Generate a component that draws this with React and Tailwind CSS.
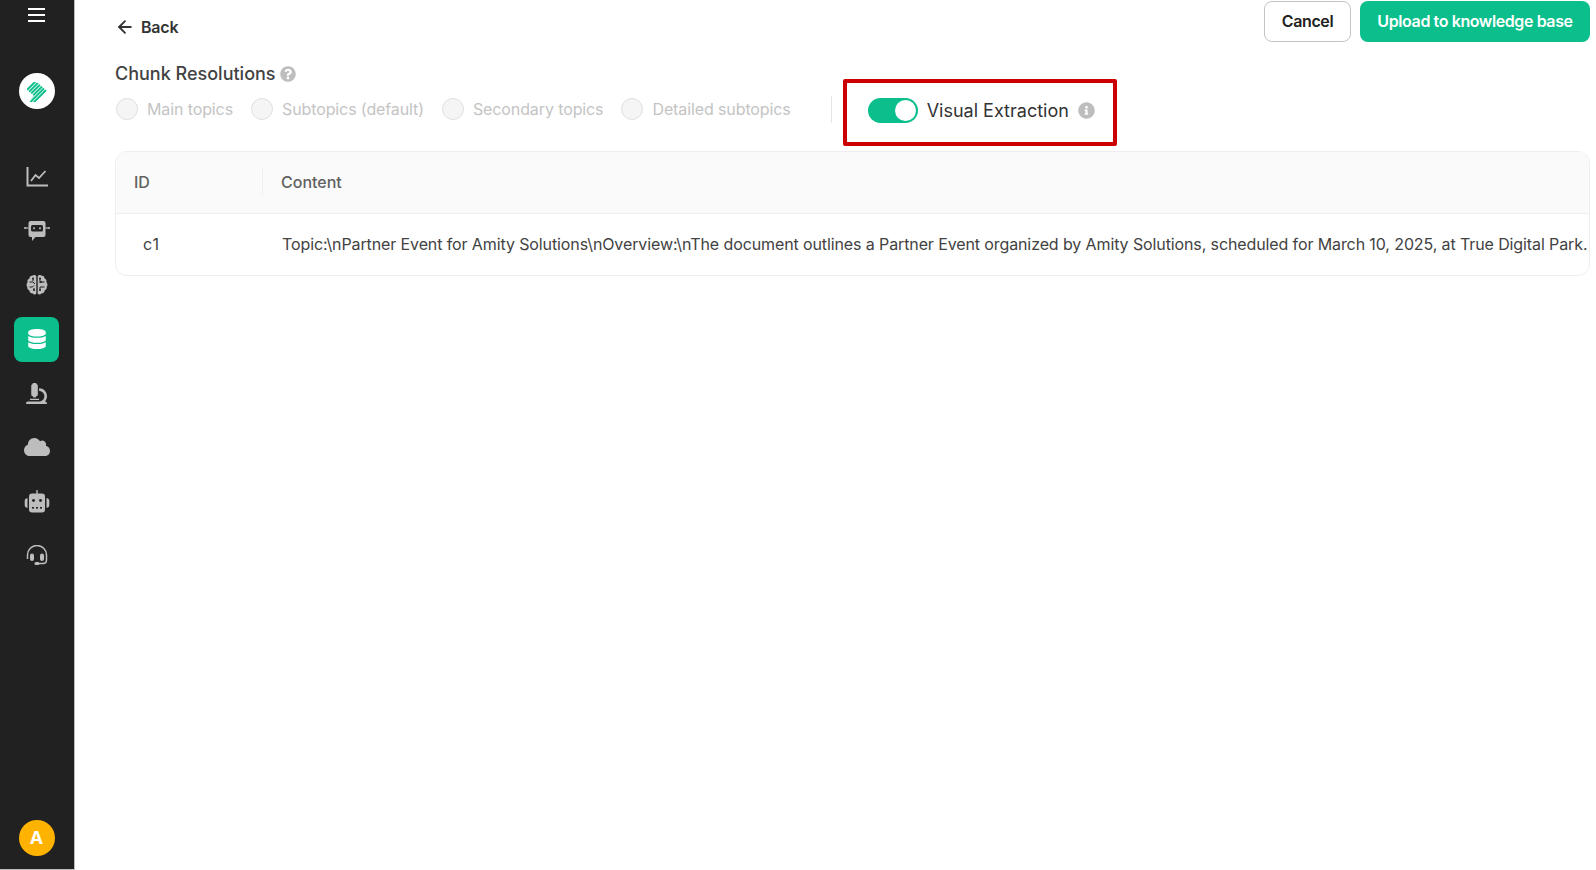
import { ArrowLeft } from 'lucide-react'
import { FaDatabase, FaMicroscope, FaCloud, FaInfoCircle, FaQuestionCircle } from 'react-icons/fa'

const font = { fontFamily: 'Inter, "Liberation Sans", sans-serif' }

function ChartIcon() {
  return (
    <svg width="22" height="20" viewBox="0 0 22 20" fill="none" stroke="#bdbdbd" strokeWidth="2">
      <path d="M1.500 0v18.500H22" />
      <path d="M5 14l4.500-6 3.500 3 6.500-7" strokeWidth="1.800" />
    </svg>
  )
}

function BotChat() {
  return (
    <svg width="26" height="22" viewBox="0 0 26 22" fill="#bdbdbd">
      <path d="M4.500 3a2 2 0 0 1 2-2h13a2 2 0 0 1 2 2v12a2 2 0 0 1-2 2h-8l-3.500 4v-4H6.500a2 2 0 0 1-2-2z" />
      <rect x="1" y="7.400" width="3.500" height="1.200" />
      <rect x="21.500" y="7.400" width="3.500" height="1.200" />
      <circle cx="1" cy="8" r="1" />
      <circle cx="25" cy="8" r="1" />
      <rect x="7" y="5" width="12" height="6.500" rx="1.500" fill="#212121" />
      <circle cx="10" cy="8.200" r="1" fill="#bdbdbd" />
      <circle cx="16" cy="8.200" r="1" fill="#bdbdbd" />
    </svg>
  )
}

function BrainIcon() {
  return (
    <svg width="22" height="22" viewBox="0 0 22 22" fill="#bdbdbd">
      <path d="M10.300 2.200C9.500.8 7.300.6 6.200 1.800 4.600 1.600 3.300 2.900 3.500 4.500 1.900 5 1 6.600 1.600 8.200.4 9.300.1 11.500 1.300 12.800.9 14.500 1.900 16 3.400 16.400c0 1.700 1.300 3 3 2.900 1 1.500 3 1.600 3.900.4z" />
      <path d="M11.700 2.200c.8-1.400 3-1.600 4.100-.4 1.600-.2 2.900 1.100 2.700 2.700 1.600.5 2.500 2.100 1.900 3.700 1.200 1.100 1.500 3.300.3 4.600.4 1.700-.6 3.200-2.100 3.600 0 1.700-1.300 3-3 2.900-1 1.500-3 1.600-3.900.4z" />
      <g stroke="#212121" strokeWidth="1" fill="none">
        <path d="M3.500 8h3.500l2 2M3.500 13h3l1.500-1.500M7 4.500v2.500M8 16v-2" />
        <path d="M18.500 8H15M14 4.500V9M18.500 13H14M14 13v3" />
      </g>
      <g fill="#212121">
        <circle cx="7" cy="4.500" r="1" />
        <circle cx="14" cy="4.500" r="1" />
        <circle cx="15" cy="8" r="1" />
        <circle cx="8" cy="16" r="1" />
        <circle cx="14" cy="16" r="1" />
      </g>
    </svg>
  )
}

function RobotIcon() {
  return (
    <svg width="26" height="24" viewBox="0 0 26 24" fill="#bdbdbd">
      <rect x="12.300" y="0" width="1.400" height="4" />
      <rect x="5" y="3.500" width="16" height="19" rx="3" />
      <path d="M3.500 8v10c-2-.4-2.800-1.500-2.800-3v-4c0-1.500.8-2.600 2.800-3zM22.500 8v10c2-.4 2.800-1.500 2.800-3v-4c0-1.500-.8-2.600-2.800-3z" />
      <circle cx="9.500" cy="10.500" r="1.400" fill="#212121" />
      <circle cx="16.500" cy="10.500" r="1.400" fill="#212121" />
      <rect x="8" y="17" width="2" height="1.600" fill="#212121" />
      <rect x="12" y="17" width="2" height="1.600" fill="#212121" />
      <rect x="16" y="17" width="2" height="1.600" fill="#212121" />
    </svg>
  )
}

function HeadsetIcon() {
  return (
    <svg width="22" height="22" viewBox="0 0 22 22" fill="none">
      <path d="M1.500 14V10a9.500 9.500 0 0 1 19 0v5c0 2-1.500 3.500-3.500 3.500h-4" stroke="#bdbdbd" strokeWidth="1.500" />
      <rect x="4" y="8.500" width="4" height="7.500" rx="2" fill="#bdbdbd" />
      <rect x="14" y="8.500" width="4" height="7.500" rx="2" fill="#bdbdbd" />
      <rect x="8.500" y="17" width="5" height="3" rx="1.500" fill="#bdbdbd" />
    </svg>
  )
}

function Logo() {
  return (
    <div className="w-9 h-9 rounded-full bg-white flex items-center justify-center">
      <svg width="22" height="22" viewBox="0 0 20 20">
        <defs>
          <clipPath id="logoShape">
            <path d="M1 5 L5 1 L8 2 L10 2 L19 10 L9 20 L3 20 L7 14 L1 9 Z" />
          </clipPath>
        </defs>
        <g clipPath="url(#logoShape)" stroke="#0cbf8c" strokeWidth="1.800">
          {[-8, -4.500, -1, 2.500, 6, 9.500, 13, 16.500, 20, 23.500].map(o => (
            <line key={o} x1={o - 4} y1="22" x2={o + 20} y2="-2" />
          ))}
        </g>
      </svg>
    </div>
  )
}

function NavItem({ active, children }) {
  return (
    <div className={'w-[45px] h-[45px] rounded-lg flex items-center justify-center ' + (active ? 'bg-[#0abf8c]' : '')}>
      {children}
    </div>
  )
}

function Sidebar() {
  return (
    <aside className="w-[75px] h-[870px] shrink-0 bg-[#212121] border-r border-b border-[#bdbdbd] flex flex-col items-center pr-px">
      <div className="mt-[8px] w-[17px] flex flex-col gap-[4px]">
        <div className="h-[2px] bg-white" />
        <div className="h-[2px] bg-white" />
        <div className="h-[2px] bg-white" />
      </div>
      <div className="mt-[51px]">
        <Logo />
      </div>
      <nav className="mt-[45px] flex flex-col gap-[9.2px]">
        <NavItem><ChartIcon /></NavItem>
        <NavItem><BotChat /></NavItem>
        <NavItem><BrainIcon /></NavItem>
        <NavItem active><FaDatabase size={20} color="#fff" /></NavItem>
        <NavItem><FaMicroscope size={21} color="#bdbdbd" /></NavItem>
        <NavItem><FaCloud size={26} color="#bdbdbd" /></NavItem>
        <NavItem><RobotIcon /></NavItem>
        <NavItem><HeadsetIcon /></NavItem>
      </nav>
      <div className="mt-auto mb-[13px] w-9 h-9 rounded-full bg-[#ffb300] text-white font-bold text-lg flex items-center justify-center">
        A
      </div>
    </aside>
  )
}

function Radio({ label }) {
  return (
    <label className="flex items-center gap-[9px]">
      <span className="w-[22px] h-[22px] rounded-full bg-[#f5f5f5] border border-[#e0e0e0]" />
      <span className="text-base tracking-[-0.11px] text-[#c4c4c4]">{label}</span>
    </label>
  )
}

export default function App() {
  return (
    <div className="flex h-[870px] w-[1596px] overflow-hidden bg-white text-[#212121]" style={font}>
      <Sidebar />

      <main className="flex-1 min-w-0 pl-[40px] pr-[6px]">
        {/* Top bar */}
        <div className="flex justify-between items-start pt-px h-[43px]">
          <button className="mt-[14px] flex items-center gap-[6px] text-base font-semibold tracking-[-0.2px] text-[#333]">
            <ArrowLeft size={20} strokeWidth={2.2} />
            Back
          </button>
          <div className="flex gap-[9px]">
            <button className="w-[87px] h-[41px] pb-px rounded-lg border border-[#c4c4c4] bg-white text-base font-semibold tracking-[-0.4px]">
              Cancel
            </button>
            <button className="w-[230px] h-[41px] pb-px rounded-lg bg-[#0abf8c] text-white text-base font-semibold tracking-[-0.4px]">
              Upload to knowledge base
            </button>
          </div>
        </div>

        {/* Chunk options */}
        <div className="mt-[20px] flex items-center gap-[4px] text-lg font-medium text-[#424242] leading-[22px]">
          Chunk Resolutions
          <FaQuestionCircle size={16} color="#bdbdbd" />
        </div>
        <div className="flex items-center -mt-[6px] h-[67px]">
          <div className="flex items-center gap-[18px] mb-[8px] ml-px">
            <Radio label="Main topics" />
            <Radio label="Subtopics (default)" />
            <Radio label="Secondary topics" />
            <Radio label="Detailed subtopics" />
          </div>
          <div className="w-px h-[27px] bg-[#e5e5e5] ml-[40px] mb-[6px]" />
          <div className="ml-[11px] w-[274px] h-[67px] border-4 border-[#cc0000] rounded-[2px] flex items-center pl-[21px] pb-[4px]">
            <span className="w-[50px] h-[25px] rounded-full bg-[#0abf8c] flex items-center justify-end pr-[2px]">
              <span className="w-[21px] h-[21px] rounded-full bg-white" />
            </span>
            <span className="ml-[9px] text-lg text-[#333]">Visual Extraction</span>
            <FaInfoCircle className="ml-[9px]" size={17} color="#bdbdbd" />
          </div>
        </div>

        {/* Table */}
        <div className="mt-[5px] border border-[#eeeeee] rounded-xl overflow-hidden">
          <div className="flex items-center h-[62px] pb-[2px] bg-[#fafafa] border-b border-[#eeeeee] text-base font-medium text-[#616161]">
            <div className="w-[147px] pl-[18px] h-[26px] flex items-center border-r border-[#eeeeee]">ID</div>
            <div className="pl-[18px]">Content</div>
          </div>
          <div className="flex items-center h-[61px] pb-[2px] text-base text-[#424242]">
            <div className="w-[147px] pl-[27px] shrink-0 tracking-[1px]">c1</div>
            <div className="pl-[19px] whitespace-nowrap tracking-[-0.11px]">
              {'Topic:\\nPartner Event for Amity Solutions\\nOverview:\\nThe document outlines a Partner Event organized by Amity Solutions, scheduled for March 10, 2025, at True Digital Park.'}
            </div>
          </div>
        </div>
      </main>
    </div>
  )
}
